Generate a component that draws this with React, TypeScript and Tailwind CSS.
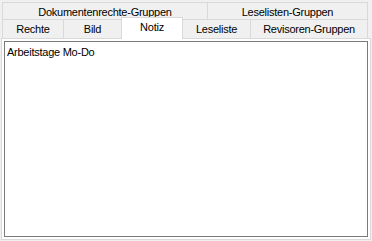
import React from "react";

const font = { fontFamily: '"Liberation Sans", Arial, sans-serif' };

function Tab({ label, w, last }: { label: string; w: string; last?: boolean }) {
  return (
    <div
      className={`${w} h-[19px] pt-[3px] shrink-0 border-t border-l border-[#d9d9d9] ${last ? "border-r" : ""} bg-[#f0f0f0] text-center text-[11px] leading-[13px] tracking-[-0.25px] text-black whitespace-nowrap`}
    >
      {label}
    </div>
  );
}

export default function App() {
  return (
    <div className="w-[372px] h-[241px] bg-[#f0f0f0] pt-[2px] overflow-hidden" style={font}>
      <div className="flex ml-[2px]">
        <div className="w-[205px] h-[17px] pt-[3px] shrink-0 border-t border-l border-[#d9d9d9] bg-[#f0f0f0] text-center text-[11px] leading-[13px] tracking-[-0.25px] text-black whitespace-nowrap">
          Dokumentenrechte-Gruppen
        </div>
        <div className="w-[161px] h-[17px] pt-[3px] shrink-0 border-t border-l border-r border-[#d9d9d9] bg-[#f0f0f0] text-center text-[11px] leading-[13px] tracking-[-0.25px] text-black whitespace-nowrap">
          Leselisten-Gruppen
        </div>
      </div>
      <div className="flex ml-[2px] items-start h-[19px]">
        <Tab label="Rechte" w="w-[61px]" />
        <Tab label="Bild" w="w-[58px]" />
        <div className="relative z-10 -mt-[2px] w-[62px] h-[22px] pt-[3px] shrink-0 border-t border-l border-r border-[#d9d9d9] bg-white text-center text-[11px] leading-[13px] tracking-[-0.25px] text-black whitespace-nowrap">
          Notiz
        </div>
        <div className="w-[67px] h-[19px] pt-[3px] shrink-0 border-t border-[#d9d9d9] bg-[#f0f0f0] text-center text-[11px] leading-[13px] tracking-[-0.25px] text-black whitespace-nowrap">
          Leseliste
        </div>
        <Tab label="Revisoren-Gruppen" w="w-[118px]" last />
      </div>
      <div className="ml-[1px] w-[370px] h-[202px] bg-white border border-[#d9d9d9] p-[2px]">
        <div className="w-full h-full border border-[#7a7a7a] bg-white px-[2px] pt-[4px] text-[11px] leading-[13px] tracking-[-0.25px] text-black">
          Arbeitstage Mo-Do
        </div>
      </div>
    </div>
  );
}
